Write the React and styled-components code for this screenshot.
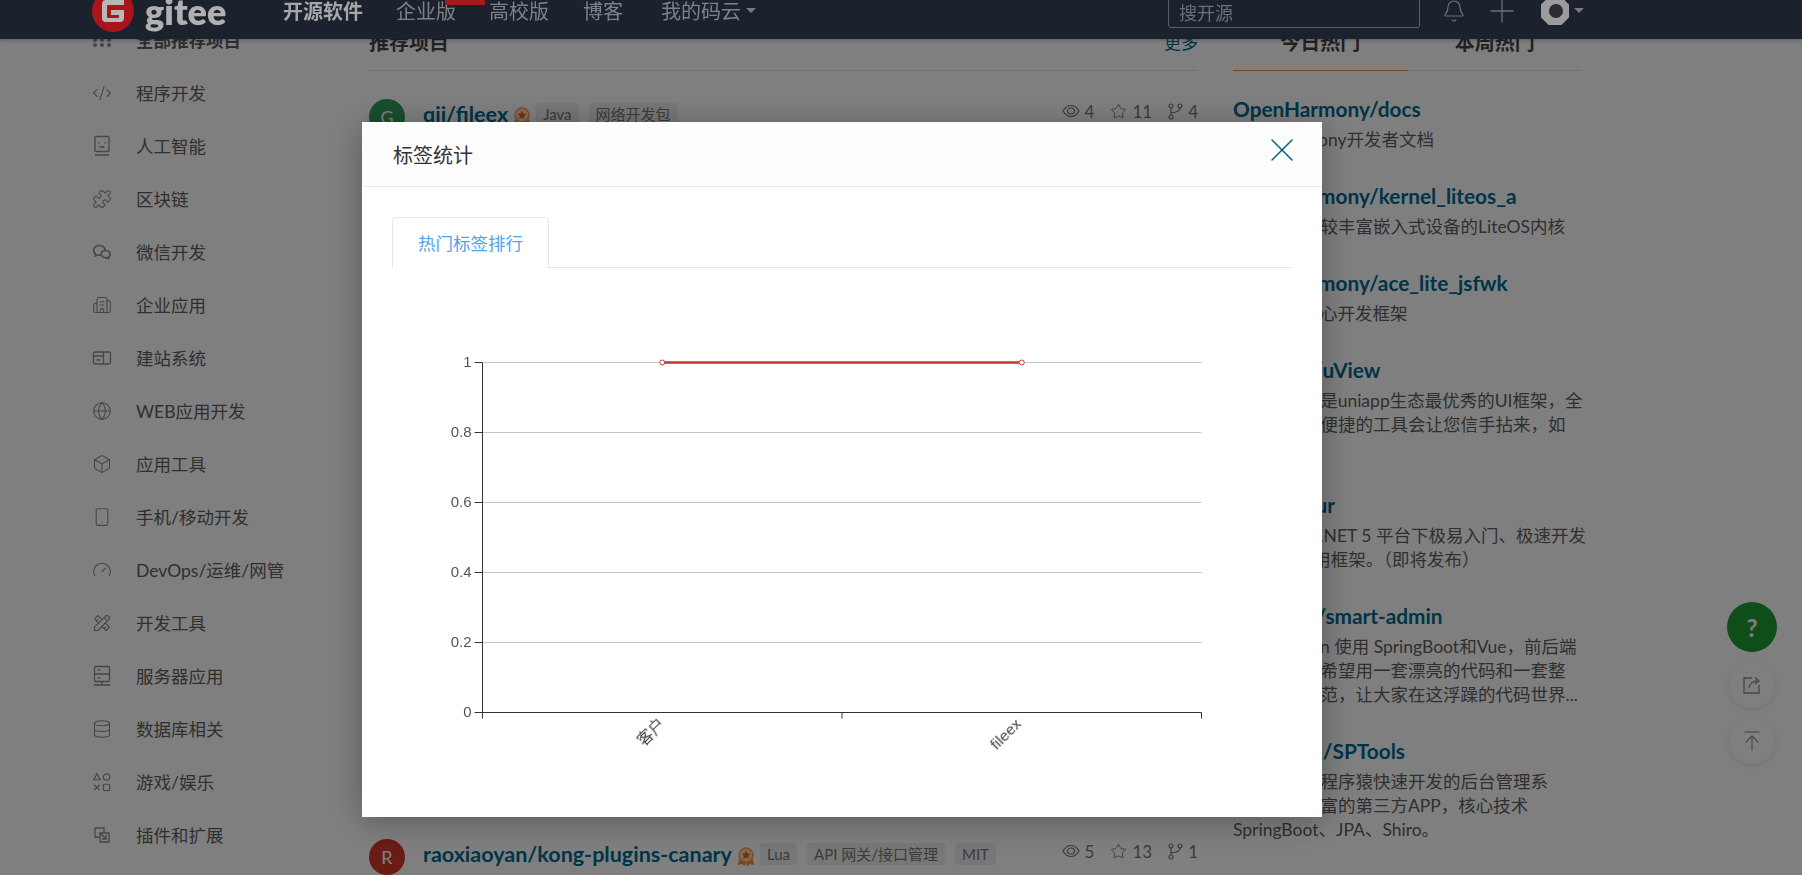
import styled, { createGlobalStyle } from "styled-components";
import {
  ArrowUpToLine,
  Bell,
  Box,
  Building2,
  CodeXml,
  Database,
  Gauge,
  Globe,
  Plus,
  Puzzle,
  Smartphone,
  Star,
  X,
} from "lucide-react";
import { RiWechatLine } from "react-icons/ri";
import { TbTools } from "react-icons/tb";

const FONT = '"Lato", "Noto Sans CJK SC", "Noto Sans", sans-serif';

const GlobalStyle = createGlobalStyle`
  html, body {
    margin: 0;
    height: 100%;
    overflow: hidden;
    background: #fff;
    font-family: ${FONT};
  }
`;

const FaceIcon = () => (
  <svg width="20" height="22" viewBox="0 0 20 22" fill="none" stroke="currentColor" strokeWidth="1.3">
    <rect x="3" y="1.5" width="14" height="15" rx="1" />
    <path d="M7 7v1.5M13 7v1.5M7.5 12h5M3 20h14" />
  </svg>
);

const WindowIcon = () => (
  <svg width="20" height="18" viewBox="0 0 20 18" fill="none" stroke="currentColor" strokeWidth="1.3">
    <rect x="1.5" y="3" width="17" height="12" rx="1.5" />
    <path d="M1.5 7h10M11.5 3v12M4.5 11h4" />
  </svg>
);

const GridIcon = () => (
  <svg width="20" height="16" viewBox="0 0 20 16" fill="currentColor">
    {[3, 10, 17].map((x) =>
      [3, 8, 13].map((y) => <circle key={x + "-" + y} cx={x} cy={y} r="2" />)
    )}
  </svg>
);

const ShapesIcon = () => (
  <svg width="22" height="22" viewBox="0 0 22 22" fill="none" stroke="currentColor" strokeWidth="1.3">
    <path d="M5.5 2 9 8.5H2z" />
    <circle cx="16" cy="5.5" r="3.5" />
    <path d="M2.5 14l6 6M8.5 14l-6 6" />
    <rect x="12.5" y="13.5" width="7" height="7" rx="1.5" />
  </svg>
);

const PluginIcon = () => (
  <svg width="20" height="20" viewBox="0 0 20 20" fill="none" stroke="currentColor" strokeWidth="1.3">
    <path d="M3 3h9v4M3 3v9h4" />
    <path d="M8 8h9v9H8zM8 8l6 6M14 10v4h-4" />
  </svg>
);

const ServerIcon = () => (
  <svg width="20" height="22" viewBox="0 0 20 22" fill="none" stroke="currentColor" strokeWidth="1.3">
    <rect x="2.5" y="1.5" width="15" height="15" rx="1" />
    <path d="M2.5 9h15M5.5 5.2h3M5.5 12.8h3M1.5 20h17M10 16.5V20" />
  </svg>
);

const EyeIcon = () => (
  <svg width="18" height="14" viewBox="0 0 18 14" fill="none" stroke="currentColor" strokeWidth="1.2">
    <path d="M1 7c2-3.5 4.800-5.500 8-5.500S15 3.500 17 7c-2 3.500-4.800 5.500-8 5.500S3 10.500 1 7z" />
    <ellipse cx="9" cy="7" rx="3.5" ry="3" />
  </svg>
);

const ForkIcon = () => (
  <svg width="15" height="17" viewBox="0 0 15 17" fill="none" stroke="currentColor" strokeWidth="1.2">
    <circle cx="3" cy="3" r="2" />
    <circle cx="12" cy="3" r="2" />
    <circle cx="3" cy="14" r="2" />
    <path d="M3 5v7M12 5c0 3-2.5 4-9 5" />
  </svg>
);

const Medal = () => (
  <svg width="18" height="20" viewBox="0 0 18 20">
    <path d="M2 12 1 18l4-1 3 2 1-4zM16 12l1 6-4-1-3 2-1-4z" fill="#ff8c2a" />
    <circle cx="9" cy="8" r="7" fill="#ffd9b0" stroke="#f0a060" strokeWidth="1.5" />
    <path d="m9 3.500 1.300 3 3.200.3-2.400 2.100.7 3.100L9 10.400 6.200 12l.7-3.100-2.400-2.100 3.200-.3z" fill="#ff5a10" />
  </svg>
);

const GiteeLogo = () => (
  <svg width="42" height="42" viewBox="0 0 42 42">
    <circle cx="21" cy="21" r="21" fill="#a8161b" />
    <path d="M32 10H14a4 4 0 0 0-4 4v14a4 4 0 0 0 4 4h14a4 4 0 0 0 4-4v-8H19v5h8v2a1 1 0 0 1-1 1H16a1 1 0 0 1-1-1V16a1 1 0 0 1 1-1h16z" fill="#b8b8b8" />
  </svg>
);

const UserAvatar = () => (
  <svg width="28" height="28" viewBox="0 0 28 28">
    <path d="M8 1h12l7 7v12l-7 7H8l-7-7V8z" fill="#9c9c9c" stroke="#9c9c9c" strokeLinejoin="round" strokeWidth="2" />
    <circle cx="15" cy="14" r="7" fill="#2a2d33" />
  </svg>
);

const ShareIcon = () => (
  <svg width="20" height="20" viewBox="0 0 20 20" fill="none" stroke="currentColor" strokeWidth="1.3">
    <path d="M10 3H2v15h15v-8" />
    <path d="M7 13c.5-4 3.5-7 8-7M13 2.500 17 6l-4 3" />
  </svg>
);

const Page = styled.div`
  height: 875px;
  overflow: hidden;
  font-family: ${FONT};
`;

const TopBar = styled.header`
  position: fixed;
  top: 0;
  left: 0;
  right: 0;
  height: 39px;
  z-index: 30;
  overflow: hidden;
  background: #1b222d;
  color: #a6a6a6;
  box-shadow: 0 1px 4px rgba(0, 0, 0, 0.3);
`;

const TopBarRow = styled.div`
  display: flex;
  align-items: center;
  height: 61px;
  margin-top: -20px;
  padding: 0 218px 0 92px;
`;

const LogoText = styled.span`
  margin-left: 11px;
  width: 82px;
  font-size: 36px;
  font-weight: 800;
  line-height: 1;
  color: #b0b0b0;
`;

const Nav = styled.nav`
  display: flex;
  gap: 33px;
  margin-left: 56px;
`;

const NavItem = styled.a`
  position: relative;
  display: flex;
  align-items: center;
  margin-left: ${(p) => p.$shift || 0}px;
  font-size: 20px;
  font-weight: ${(p) => (p.$bold ? 700 : 400)};
  color: ${(p) => (p.$bold ? "#a6a6a6" : "#7e8288")};
`;

const NavBadge = styled.span`
  position: absolute;
  top: -2px;
  right: -29px;
  width: 40px;
  height: 11px;
  background: #a31a1e;
`;

const Caret = styled.i`
  width: 0;
  height: 0;
  margin-left: 5px;
  border: 5px solid transparent;
  border-top-color: #7a7a7a;
  border-bottom: 0;
`;

const SearchBox = styled.div`
  box-sizing: border-box;
  width: 252px;
  height: 48px;
  margin: 0 0 14px auto;
  padding: 20px 10px 0;
  border: 1px solid #5a5f68;
  border-radius: 3px;
  font-size: 18px;
  line-height: 24px;
  color: #6c7077;
`;

const TopIcons = styled.div`
  display: flex;
  align-items: center;
  margin-left: 22px;
  color: #6c7077;
  svg {
    flex: none;
  }
`;

const PlusSlot = styled.span`
  display: flex;
  margin-left: 17px;
`;

const AvatarWrap = styled.div`
  display: flex;
  align-items: center;
  margin-left: 20px;
`;

const Columns = styled.div`
  display: grid;
  grid-template-columns: 242px 829px 349px;
  column-gap: 35px;
  padding: 13px 0 0 92px;
`;

const SideList = styled.ul`
  margin: 0;
  padding: 0;
  list-style: none;
`;

const SideRow = styled.li`
  display: flex;
  align-items: center;
  height: 53px;
  font-size: 17.5px;
  font-weight: ${(p) => (p.$active ? 700 : 400)};
  color: #5e5e5e;
`;

const SideIcon = styled.span`
  display: flex;
  justify-content: center;
  width: 20px;
  margin-right: 24px;
  color: #8c8c8c;
`;

const SectionHead = styled.div`
  display: flex;
  align-items: center;
  justify-content: space-between;
  box-sizing: border-box;
  height: 58px;
  padding-bottom: 1px;
  border-bottom: 1px solid #e3e3e3;
  font-size: 20px;
  font-weight: 700;
  color: #444;
`;

const MoreLink = styled.a`
  font-size: 17px;
  font-weight: 400;
  color: #00688f;
`;

const ProjectList = styled.div`
  display: flex;
  flex-direction: column;
  justify-content: space-between;
  height: 776px;
  margin-top: 28px;
`;

const ProjectRow = styled.div`
  display: flex;
  align-items: center;
  height: 36px;
`;

const RowAvatar = styled.span`
  display: flex;
  align-items: center;
  justify-content: center;
  flex: none;
  width: 36px;
  height: 36px;
  margin-right: 18px;
  border-radius: 50%;
  background: ${(p) => p.$color};
  color: #fff;
  font-size: 18px;
`;

const ProjectName = styled.a`
  margin: -6px 5px 0 0;
  font-size: 21.5px;
  font-weight: 700;
  color: #00688f;
`;

const Tag = styled.span`
  margin: -6px 5px 0 5px;
  padding: 0 7px;
  border-radius: 3px;
  background: #eeeeee;
  font-size: 15px;
  line-height: 22px;
  color: #777;
`;

const Stats = styled.div`
  display: flex;
  align-items: center;
  gap: 16px;
  margin: -12px 0 0 auto;
  font-size: 17px;
  color: #777;
`;

const Stat = styled.span`
  display: flex;
  align-items: center;
  gap: 5px;
`;

const HotTabs = styled.div`
  display: grid;
  grid-template-columns: 1fr 1fr;
  box-sizing: border-box;
  height: 58px;
  padding-bottom: 1px;
  border-bottom: 1px solid #e3e3e3;
`;

const HotTab = styled.div`
  display: flex;
  align-items: center;
  justify-content: center;
  margin-bottom: -2px;
  border-bottom: 1px solid ${(p) => (p.$active ? "#f08a3c" : "transparent")};
  font-size: 20px;
  font-weight: 700;
  color: #444;
`;

const HotList = styled.div`
  padding-top: 23px;
`;

const HotItem = styled.div`
  margin-bottom: 29px;
`;

const HotTitle = styled.a`
  display: block;
  margin-bottom: 4px;
  font-size: 20.8px;
  font-weight: 700;
  line-height: 30px;
  color: #00688f;
`;

const HotLine = styled.div`
  font-size: 17.5px;
  line-height: 24px;
  white-space: nowrap;
  color: #5e5e5e;
`;

const FloatBar = styled.div`
  position: fixed;
  top: 602px;
  right: 25px;
  display: flex;
  flex-direction: column;
  align-items: center;
  gap: 10px;
`;

const HelpButton = styled.div`
  display: flex;
  align-items: center;
  justify-content: center;
  width: 50px;
  height: 50px;
  border-radius: 50%;
  background: #1f9b33;
  font-size: 24px;
  font-weight: 700;
  color: #fff;
`;

const FloatButton = styled.div`
  display: flex;
  align-items: center;
  justify-content: center;
  width: 46px;
  height: 46px;
  border-radius: 50%;
  background: #fff;
  box-shadow: 0 2px 8px rgba(0, 0, 0, 0.1);
  color: #8c8c8c;
`;

const Overlay = styled.div`
  position: fixed;
  inset: 0;
  z-index: 10;
  background: rgba(0, 0, 0, 0.5);
`;

const Modal = styled.div`
  position: fixed;
  top: 122px;
  left: 362px;
  z-index: 20;
  width: 960px;
  height: 695px;
  background: #fff;
  box-shadow: 0 4px 30px rgba(0, 0, 0, 0.3);
`;

const ModalHead = styled.div`
  display: flex;
  align-items: center;
  justify-content: space-between;
  box-sizing: border-box;
  height: 65px;
  padding: 0 20px 0 31px;
  border-bottom: 1px solid #eaeaea;
  background: #fdfdfd;
  font-size: 20px;
  color: #333;
`;

const CloseButton = styled.span`
  display: flex;
  margin-top: -9px;
  color: #005f87;
`;

const ModalBody = styled.div`
  padding: 30px 30px 0;
`;

const TabBar = styled.div`
  display: flex;
  height: 50px;
  border-bottom: 1px solid #e8e8e8;
`;

const Tab = styled.div`
  box-sizing: border-box;
  height: 51px;
  padding: 0 25px;
  border: 1px solid #e8e8e8;
  border-bottom: 0;
  border-radius: 4px 4px 0 0;
  background: #fff;
  font-size: 17.5px;
  line-height: 52px;
  color: #4fa3e6;
`;

const ChartSvg = styled.svg`
  display: block;
  font-family: "Liberation Sans", "Noto Sans CJK SC", sans-serif;
`;

const sideItems = [
  ["全部推荐项目", <GridIcon />],
  ["程序开发", <CodeXml size={22} strokeWidth={1.3} />],
  ["人工智能", <FaceIcon />],
  ["区块链", <Puzzle size={20} strokeWidth={1.3} />],
  ["微信开发", <RiWechatLine size={22} />],
  ["企业应用", <Building2 size={20} strokeWidth={1.3} />],
  ["建站系统", <WindowIcon />],
  ["WEB应用开发", <Globe size={20} strokeWidth={1.3} />],
  ["应用工具", <Box size={22} strokeWidth={1.3} />],
  ["手机/移动开发", <Smartphone size={24} strokeWidth={1.3} />],
  ["DevOps/运维/网管", <Gauge size={22} strokeWidth={1.3} />],
  ["开发工具", <TbTools size={20} strokeWidth={1.3} />],
  ["服务器应用", <ServerIcon />],
  ["数据库相关", <Database size={20} strokeWidth={1.3} />],
  ["游戏/娱乐", <ShapesIcon />],
  ["插件和扩展", <PluginIcon />],
];

const hotItems = [
  { title: "OpenHarmony/docs", lines: ["OpenHarmony开发者文档"] },
  {
    title: "OpenHarmony/kernel_liteos_a",
    lines: ["面向资源比较丰富嵌入式设备的LiteOS内核"],
  },
  { title: "OpenHarmony/ace_lite_jsfwk", lines: ["轻量级JS核心开发框架"] },
  {
    title: "uview-ui/uView",
    lines: [
      "uView UI，是uniapp生态最优秀的UI框架，全",
      "面的组件和便捷的工具会让您信手拈来，如",
      "鱼得水。",
    ],
  },
  {
    title: "dotnet/Fur",
    lines: ["Fur 是基于 .NET 5 平台下极易入门、极速开发", "的 Web 应用框架。（即将发布）"],
  },
  {
    title: "lab-1024/smart-admin",
    lines: [
      "smart-admin 使用 SpringBoot和Vue，前后端",
      "分离，我们希望用一套漂亮的代码和一套整",
      "洁优雅的规范，让大家在这浮躁的代码世界...",
    ],
  },
  {
    title: "小柒2012/SPTools",
    lines: [
      "专为中小型程序猿快速开发的后台管理系",
      "统，拥有丰富的第三方APP，核心技术",
      "SpringBoot、JPA、Shiro。",
    ],
  },
];

const projects = [
  {
    letter: "G",
    color: "#2f9e5b",
    name: "qjj/fileex",
    tags: ["Java", "网络开发包"],
    stats: [4, 11, 4],
  },
  {
    letter: "R",
    color: "#d0392b",
    name: "raoxiaoyan/kong-plugins-canary",
    tags: ["Lua", "API 网关/接口管理", "MIT"],
    stats: [5, 13, 1],
  },
];

// chart geometry, the .5 keeps the 1px lines crisp
const chart = {
  left: 90.5,
  right: 809.5,
  top: 94.5,
  bottom: 444.5,
  ticks: ["0", "0.2", "0.4", "0.6", "0.8", "1"],
  labels: ["客户", "fileex"],
};

const TagChart = () => {
  const { left, right, top, bottom, ticks, labels } = chart;
  const band = (right - left) / labels.length;
  const points = labels.map((_, i) => left + band * (i + 0.5));
  const step = (bottom - top) / (ticks.length - 1);

  return (
    <ChartSvg width="900" height="520" viewBox="0 0 900 520">
      {ticks.map((t, i) => {
        const y = bottom - step * i;
        return (
          <g key={t}>
            {i > 0 && <line x1={left} x2={right} y1={y} y2={y} stroke="#c4c4c4" />}
            <line x1={left - 8} x2={left} y1={y} y2={y} stroke="#333" />
            <text x={left - 11} y={y + 4} textAnchor="end" fontSize="15" fill="#555">
              {t}
            </text>
          </g>
        );
      })}
      <line x1={left} x2={left} y1={top} y2={bottom} stroke="#333" />
      <line x1={left} x2={right} y1={bottom} y2={bottom} stroke="#333" />
      {[0, 1, 2].map((i) => (
        <line
          key={i}
          x1={left + band * i}
          x2={left + band * i}
          y1={bottom}
          y2={bottom + 6}
          stroke="#333"
        />
      ))}
      {labels.map((label, i) => (
        <text
          key={label}
          x={points[i] + (i === 0 ? 3 : 0)}
          y={bottom + 12}
          textAnchor="end"
          fontSize="15.5"
          fill="#444"
          transform={`rotate(-45 ${points[i] + (i === 0 ? 3 : 0)} ${bottom + 12})`}
        >
          {label}
        </text>
      ))}
      <line x1={points[0]} x2={points[1]} y1={top} y2={top} stroke="#c23531" strokeWidth="2.5" />
      {points.map((x) => (
        <circle key={x} cx={x} cy={top} r="2.5" fill="#fff" stroke="#c23531" />
      ))}
    </ChartSvg>
  );
};

const App = () => {
  return (
    <Page>
      <GlobalStyle />
      <Columns>
        <SideList>
          {sideItems.map(([label, icon], i) => (
            <SideRow key={label} $active={i === 0}>
              <SideIcon>{icon}</SideIcon>
              {label}
            </SideRow>
          ))}
        </SideList>

        <div>
          <SectionHead>
            推荐项目
            <MoreLink>更多</MoreLink>
          </SectionHead>
          <ProjectList>
            {projects.map((p) => (
              <ProjectRow key={p.name}>
                <RowAvatar $color={p.color}>{p.letter}</RowAvatar>
                <ProjectName>{p.name}</ProjectName>
                <Medal />
                {p.tags.map((t) => (
                  <Tag key={t}>{t}</Tag>
                ))}
                <Stats>
                  <Stat>
                    <EyeIcon />
                    {p.stats[0]}
                  </Stat>
                  <Stat>
                    <Star size={17} strokeWidth={1.3} />
                    {p.stats[1]}
                  </Stat>
                  <Stat>
                    <ForkIcon />
                    {p.stats[2]}
                  </Stat>
                </Stats>
              </ProjectRow>
            ))}
          </ProjectList>
        </div>

        <div>
          <HotTabs>
            <HotTab $active>今日热门</HotTab>
            <HotTab>本周热门</HotTab>
          </HotTabs>
          <HotList>
            {hotItems.map((item) => (
              <HotItem key={item.title}>
                <HotTitle>{item.title}</HotTitle>
                {item.lines.map((line) => (
                  <HotLine key={line}>{line}</HotLine>
                ))}
              </HotItem>
            ))}
          </HotList>
        </div>
      </Columns>

      <FloatBar>
        <HelpButton>?</HelpButton>
        <FloatButton>
          <ShareIcon />
        </FloatButton>
        <FloatButton>
          <ArrowUpToLine size={24} strokeWidth={1.1} />
        </FloatButton>
      </FloatBar>

      <Overlay />

      <Modal>
        <ModalHead>
          标签统计
          <CloseButton>
            <X size={40} strokeWidth={0.9} />
          </CloseButton>
        </ModalHead>
        <ModalBody>
          <TabBar>
            <Tab>热门标签排行</Tab>
          </TabBar>
          <TagChart />
        </ModalBody>
      </Modal>

      <TopBar>
        <TopBarRow>
          <GiteeLogo />
          <LogoText>gitee</LogoText>
          <Nav>
            <NavItem $bold>开源软件</NavItem>
            <NavItem>
              企业版
              <NavBadge />
            </NavItem>
            <NavItem>高校版</NavItem>
            <NavItem $shift={1}>博客</NavItem>
            <NavItem $shift={5}>
              我的码云
              <Caret />
            </NavItem>
          </Nav>
          <SearchBox>搜开源</SearchBox>
          <TopIcons>
            <Bell size={24} strokeWidth={1.2} />
            <PlusSlot>
              <Plus size={38} strokeWidth={0.8} />
            </PlusSlot>
            <AvatarWrap>
              <UserAvatar />
              <Caret />
            </AvatarWrap>
          </TopIcons>
        </TopBarRow>
      </TopBar>
    </Page>
  );
};

export default App;
